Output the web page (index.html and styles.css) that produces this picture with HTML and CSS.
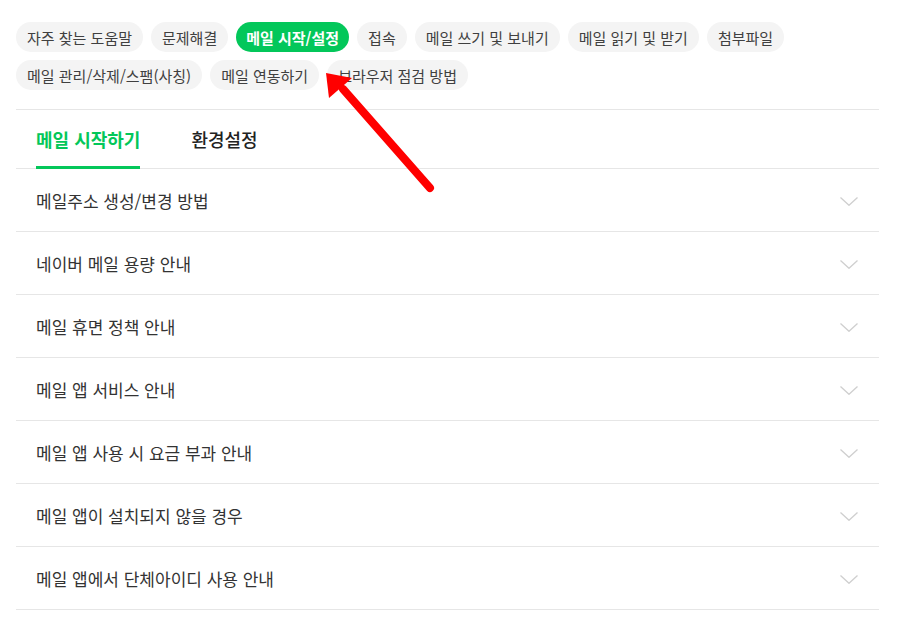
FILE: index.html
```html
<!DOCTYPE html>
<html lang="ko">
<head>
<meta charset="utf-8">
<link rel="stylesheet" href="styles.css">
</head>
<body>
<div class="page">
  <div class="chips">
    <span class="chip">자주 찾는 도움말</span>
    <span class="chip">문제해결</span>
    <span class="chip active">메일 시작/설정</span>
    <span class="chip">접속</span>
    <span class="chip">메일 쓰기 및 보내기</span>
    <span class="chip">메일 읽기 및 받기</span>
    <span class="chip">첨부파일</span>
    <span class="chip">메일 관리/삭제/스팸(사칭)</span>
    <span class="chip">메일 연동하기</span>
    <span class="chip">브라우저 점검 방법</span>
  </div>
  <div class="tabs">
    <span class="tab on">메일 시작하기</span>
    <span class="tab">환경설정</span>
  </div>
  <ul class="list">
    <li class="item"><span>메일주소 생성/변경 방법</span><svg class="chev" viewBox="0 0 18 9" width="18" height="9"><path d="M0.5 0.5 L9 8.3 L17.5 0.5" fill="none" stroke="#cfcfcf" stroke-width="1.3"/></svg></li>
    <li class="item"><span>네이버 메일 용량 안내</span><svg class="chev" viewBox="0 0 18 9" width="18" height="9"><path d="M0.5 0.5 L9 8.3 L17.5 0.5" fill="none" stroke="#cfcfcf" stroke-width="1.3"/></svg></li>
    <li class="item"><span>메일 휴면 정책 안내</span><svg class="chev" viewBox="0 0 18 9" width="18" height="9"><path d="M0.5 0.5 L9 8.3 L17.5 0.5" fill="none" stroke="#cfcfcf" stroke-width="1.3"/></svg></li>
    <li class="item"><span>메일 앱 서비스 안내</span><svg class="chev" viewBox="0 0 18 9" width="18" height="9"><path d="M0.5 0.5 L9 8.3 L17.5 0.5" fill="none" stroke="#cfcfcf" stroke-width="1.3"/></svg></li>
    <li class="item"><span>메일 앱 사용 시 요금 부과 안내</span><svg class="chev" viewBox="0 0 18 9" width="18" height="9"><path d="M0.5 0.5 L9 8.3 L17.5 0.5" fill="none" stroke="#cfcfcf" stroke-width="1.3"/></svg></li>
    <li class="item"><span>메일 앱이 설치되지 않을 경우</span><svg class="chev" viewBox="0 0 18 9" width="18" height="9"><path d="M0.5 0.5 L9 8.3 L17.5 0.5" fill="none" stroke="#cfcfcf" stroke-width="1.3"/></svg></li>
    <li class="item"><span>메일 앱에서 단체아이디 사용 안내</span><svg class="chev" viewBox="0 0 18 9" width="18" height="9"><path d="M0.5 0.5 L9 8.3 L17.5 0.5" fill="none" stroke="#cfcfcf" stroke-width="1.3"/></svg></li>
  </ul>
</div>
<svg class="arrow" width="907" height="639" viewBox="0 0 907 639">
  <line x1="430" y1="188" x2="343" y2="89" stroke="#ff0000" stroke-width="8" stroke-linecap="round"/>
  <polygon points="326,73 352,78 329,98" fill="#ff0000"/>
</svg>
</body>
</html>
```
FILE: styles.css
```css
html, body {
  margin: 0;
  padding: 0;
  background: #fff;
}
body {
  font-family: "Noto Sans CJK KR", "Noto Sans", sans-serif;
  color: #333;
  width: 907px;
  height: 639px;
  overflow: hidden;
  position: relative;
}
.page {
  width: 863px;
  margin-left: 16px;
  padding-top: 22px;
}
.chips {
  display: flex;
  flex-wrap: wrap;
  gap: 8px 8px;
  padding-bottom: 19px;
  border-bottom: 1px solid #e6e6e6;
}
.chip {
  display: inline-flex;
  align-items: center;
  height: 30px;
  padding: 0 11px;
  border-radius: 15px;
  background: #f4f4f4;
  color: #404040;
  font-size: 15px;
  white-space: nowrap;
}
.chip.active {
  background: #03c75a;
  color: #fff;
  font-weight: 700;
  padding: 0 10px;
}
.tabs {
  display: flex;
  gap: 51px;
  padding-left: 20px;
  height: 58px;
  border-bottom: 1px solid #e6e6e6;
}
.tab {
  display: flex;
  align-items: center;
  font-size: 18px;
  font-weight: 500;
  color: #222;
  height: 100%;
  position: relative;
}
.tab.on {
  color: #03c75a;
  font-weight: 700;
}
.tab.on::after {
  content: "";
  position: absolute;
  left: 0;
  right: 0;
  bottom: -1px;
  height: 3px;
  background: #03c75a;
}
.list {
  list-style: none;
  margin: 0;
  padding: 0;
}
.item {
  display: flex;
  align-items: center;
  justify-content: space-between;
  height: 62px;
  padding: 0 21px 0 20px;
  border-bottom: 1px solid #e6e6e6;
  font-size: 17px;
  color: #333;
}
.chev {
  display: block;
  margin-top: 3px;
}
.arrow {
  position: absolute;
  left: 0;
  top: 0;
  pointer-events: none;
}
```
